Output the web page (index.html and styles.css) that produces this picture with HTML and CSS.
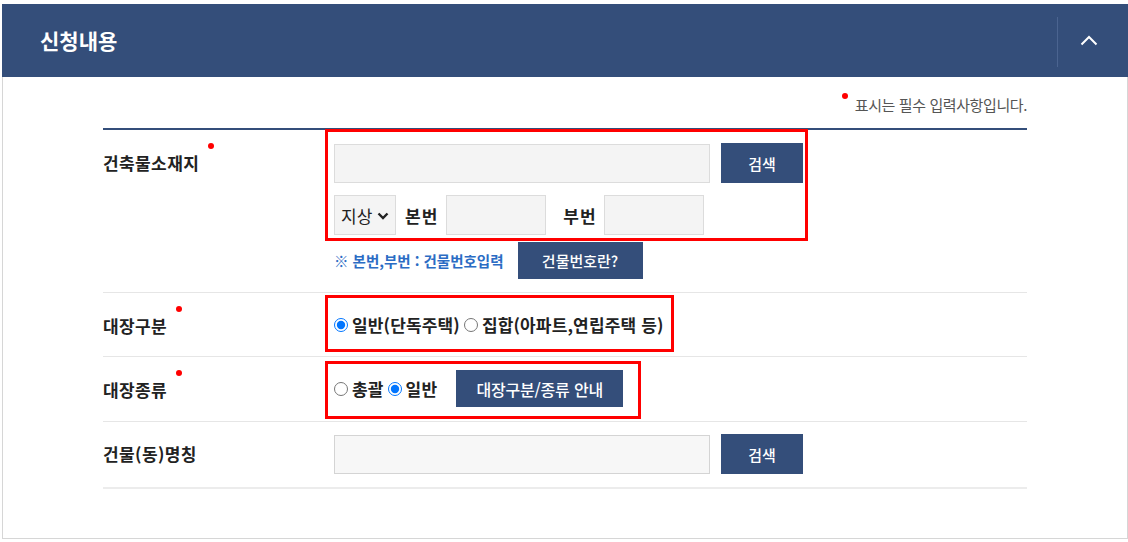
FILE: index.html
```html
<!DOCTYPE html>
<html lang="ko">
<head>
<meta charset="utf-8">
<title>신청내용</title>
<link rel="stylesheet" href="styles.css">
</head>
<body>
<section class="panel">
  <header class="panel-head">
    <h2 class="panel-title">신청내용</h2>
    <button class="toggle" type="button" aria-label="접기">
      <svg width="18" height="12" viewBox="0 0 18 12"><path d="M1.5 10.5 L9 3 L16.5 10.5" fill="none" stroke="#fff" stroke-width="2"/></svg>
    </button>
  </header>
  <div class="panel-body">
    <p class="req-note"><span class="dot dot-note"></span>표시는 필수 입력사항입니다.</p>
    <div class="form-table">
      <div class="row row-addr">
        <div class="label">건축물소재지<span class="dot"></span></div>
        <div class="field">
          <div class="line">
            <input class="inp inp-wide" type="text">
            <button class="btn btn-search" type="button">검색</button>
          </div>
          <div class="line line-2">
            <span class="sel-wrap">
              <select class="sel"><option>지상</option></select>
              <svg class="sel-arrow" width="12" height="8" viewBox="0 0 12 8"><path d="M1.5 1.5 L6 6 L10.5 1.5" fill="none" stroke="#222" stroke-width="2.4"/></svg>
            </span>
            <span class="sub-label sub-1">본번</span>
            <input class="inp inp-small" type="text">
            <span class="sub-label sub-2">부번</span>
            <input class="inp inp-small" type="text">
          </div>
          <div class="line line-3">
            <span class="hint">※ 본번,부번 : 건물번호입력</span>
            <button class="btn btn-info" type="button">건물번호란?</button>
          </div>
        </div>
      </div>
      <div class="row row-radio">
        <div class="label">대장구분<span class="dot"></span></div>
        <div class="field field-radio">
          <label class="opt"><input type="radio" name="kind" checked>일반(단독주택)</label>
          <label class="opt"><input type="radio" name="kind">집합(아파트,연립주택 등)</label>
        </div>
      </div>
      <div class="row row-radio2">
        <div class="label">대장종류<span class="dot"></span></div>
        <div class="field field-radio">
          <label class="opt"><input type="radio" name="type">총괄</label>
          <label class="opt"><input type="radio" name="type" checked>일반</label>
          <button class="btn btn-guide" type="button">대장구분/종류 안내</button>
        </div>
      </div>
      <div class="row row-name">
        <div class="label">건물(동)명칭</div>
        <div class="field">
          <div class="line">
            <input class="inp inp-wide inp-light" type="text">
            <button class="btn btn-search" type="button">검색</button>
          </div>
        </div>
      </div>
    </div>
  </div>
  <div class="mark mark-1"></div>
  <div class="mark mark-2"></div>
  <div class="mark mark-3"></div>
</section>
</body>
</html>
```

FILE: styles.css
```css
* { box-sizing: border-box; }
html, body { margin: 0; padding: 0; background: #fff; }
body {
  padding: 4px 0 0 2px;
  font-family: "Noto Sans CJK KR", "Noto Sans", sans-serif;
  color: #222;
}
.panel {
  position: relative;
  width: 1126px;
  height: 535px;
  border: 1px solid #d6d6d6;
  border-top: 0;
}
.panel-head {
  margin: 0 -1px;
  height: 73px;
  background: #344e7a;
  display: flex;
  align-items: center;
  justify-content: space-between;
}
.panel-title {
  margin: 0 0 0 38px;
  font-size: 21px;
  font-weight: 700;
  color: #fff;
  letter-spacing: 0;
  line-height: 1;
}
.toggle {
  height: 50px;
  width: 71px;
  margin-top: 2px;
  padding: 0 8px 4px 0;
  border: 0;
  border-left: 1px solid #4b6490;
  background: transparent;
  display: flex;
  align-items: center;
  justify-content: center;
}
.panel-body {
  padding: 16px 100px 0 100px;
}
.req-note {
  margin: 0 0 15px;
  height: 20px;
  text-align: right;
  font-size: 15px;
  line-height: 20px;
  color: #555;
  letter-spacing: -0.4px;
}
.dot {
  display: inline-block;
  width: 6px;
  height: 6px;
  border-radius: 50%;
  background: #f00;
  margin-left: 9px;
  vertical-align: 21px;
}
.dot.dot-note {
  margin: 0 7px 0 0;
  vertical-align: 12px;
}
.form-table {
  border-top: 2px solid #344e7a;
}
.row {
  display: flex;
  align-items: flex-start;
  border-bottom: 1px solid #e6e6e6;
}
.row-name { border-bottom: 2px solid #ececec; }
.label {
  width: 231px;
  flex: none;
  font-size: 17px;
  font-weight: 700;
  line-height: 40px;
  height: 40px;
  letter-spacing: 0.4px;
  color: #222;
}
.row-addr { padding: 13px 0; }
.row-radio { padding: 13px 0 13px; }
.row-radio2 { padding: 13px 0 14px; }
.row-radio .label, .row-radio2 .label { line-height: 37px; height: 37px; }
.row-name { padding: 12px 0 13px; }
.row-name .label { line-height: 39px; height: 39px; }
.field { flex: 1; }
.line { display: flex; align-items: center; }
.line-2 { margin-top: 12px; }
.line-3 { margin-top: 7px; }
.inp {
  height: 40px;
  border: 1px solid #dcdcdc;
  background: #f4f4f4;
  outline: none;
  font: inherit;
  padding: 0 8px;
}
.inp-wide { width: 376px; height: 39px; }
.inp-light { background: #f7f7f7; border-color: #d4d4d4; }
.inp-small { width: 100px; }
.btn {
  border: 0;
  background: #344e7a;
  color: #fff;
  font-family: inherit;
  font-size: 15px;
  font-weight: 500;
  letter-spacing: 0;
  padding: 0;
}
.btn-search {
  width: 82px;
  height: 40px;
  margin-left: 11px;
}
.sel-wrap {
  position: relative;
  display: inline-flex;
}
.sel {
  -webkit-appearance: none;
  appearance: none;
  width: 62px;
  height: 40px;
  border: 1px solid #dcdcdc;
  border-radius: 0;
  background-color: #f4f4f4;
  font-family: inherit;
  font-size: 17px;
  color: #222;
  padding: 0 0 0 6px;
}
.sel-arrow {
  position: absolute;
  left: 43px;
  top: 17px;
  pointer-events: none;
}
.sub-label {
  font-size: 17px;
  font-weight: 700;
  color: #222;
  letter-spacing: 1px;
}
.sub-1 { margin: 0 8px 0 9px; }
.sub-2 { margin: 0 7px 0 17px; }
.hint {
  font-size: 14.5px;
  font-weight: 700;
  color: #2b6cc4;
  letter-spacing: 0;
}
.btn-info {
  width: 125px;
  height: 37px;
  margin-left: 14px;
}
.field-radio {
  display: flex;
  align-items: center;
  height: 37px;
  font-size: 17px;
  font-weight: 700;
  letter-spacing: 0.15px;
}
.opt {
  display: inline-flex;
  align-items: center;
  margin-right: 4px;
}
.opt input {
  width: 14px;
  height: 14px;
  margin: 0 4px 0 0;
  accent-color: #0075ff;
}
.btn-guide {
  width: 167px;
  height: 37px;
  margin-left: 15px;
  font-size: 16px;
  letter-spacing: -0.2px;
}
.mark {
  position: absolute;
  border: 3px solid #f00;
  pointer-events: none;
}
.mark-1 { left: 322px; top: 125px; width: 483px; height: 112px; }
.mark-2 { left: 322px; top: 291px; width: 349px; height: 57px; }
.mark-3 { left: 322px; top: 357px; width: 316px; height: 58px; }
```
